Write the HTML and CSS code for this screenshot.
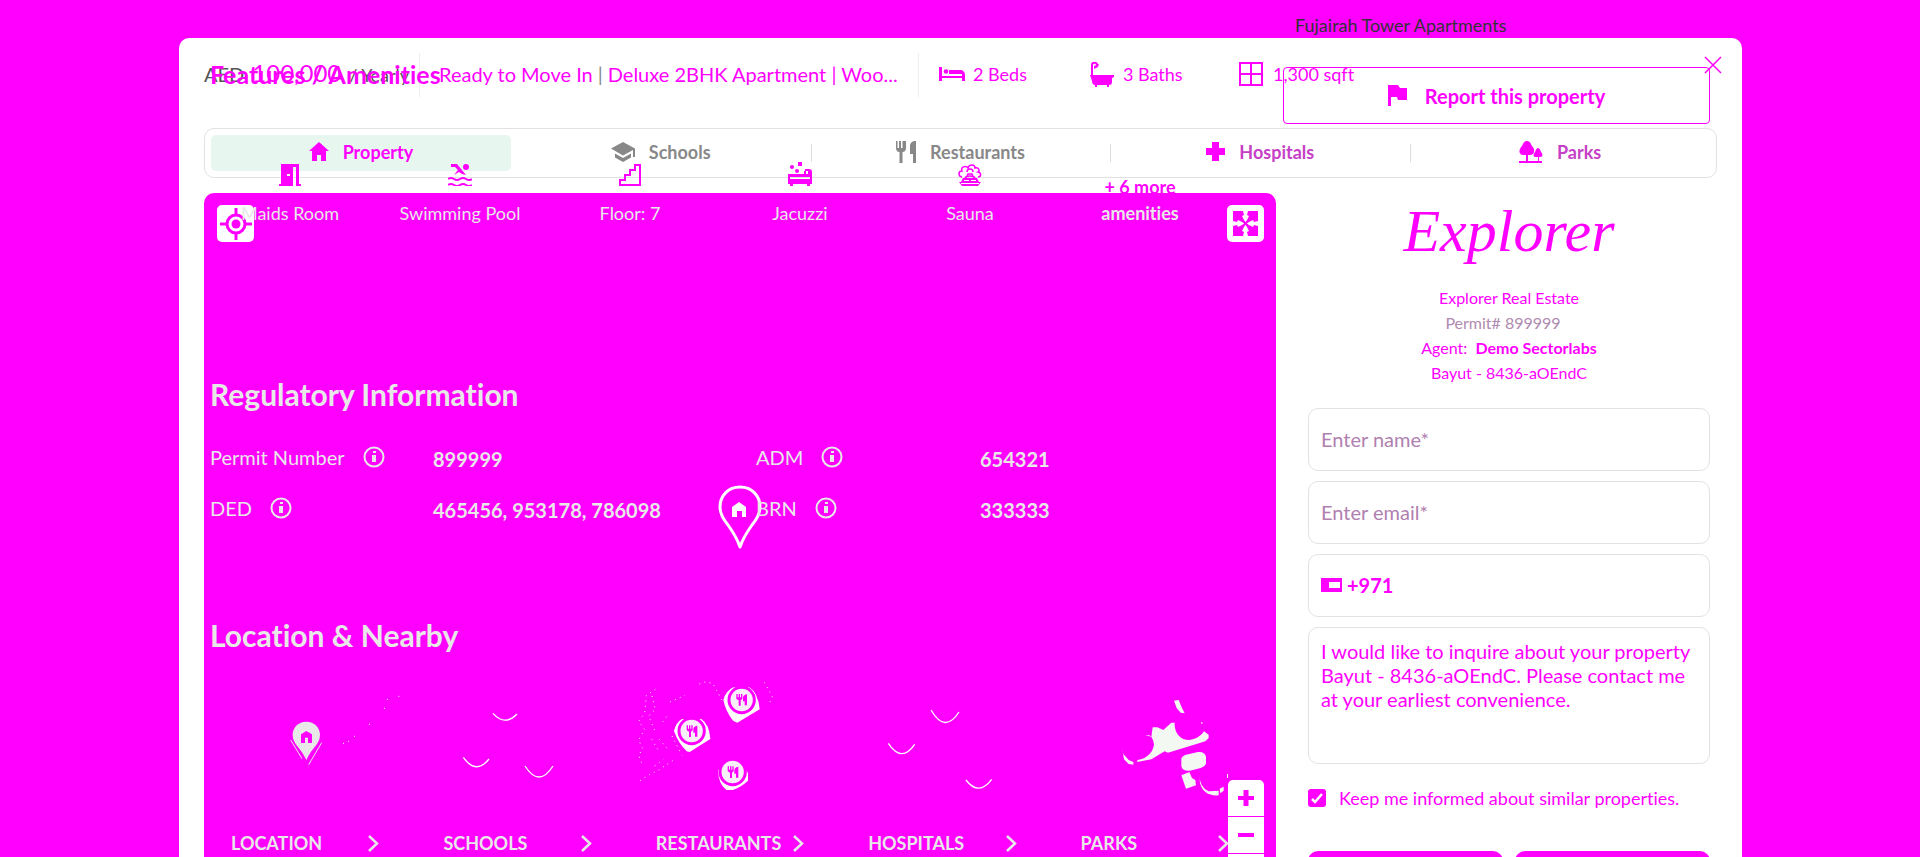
FILE: index.html
```html
<!DOCTYPE html>
<html lang="en">
<head>
<meta charset="utf-8">
<title>Fujairah Tower Apartments</title>
<link rel="stylesheet" href="styles.css">
</head>
<body>
<main class="modal">
  <button class="close" aria-label="Close"><svg width="18" height="18" viewBox="0 0 18 18"><path d="M1 1 17 17M17 1 1 17" stroke="currentColor" stroke-width="1.5"/></svg></button>
  <header class="summary">
    <div class="price"><span>AED</span> <strong>100,000</strong> <small>/ Yearly</small></div>
    <div class="title">Ready to Move In <span class="bar">|</span> Deluxe 2BHK Apartment | Woo...</div>
    <ul class="facts">
      <li><svg width="26" height="26" viewBox="0 0 26 26"><path fill="currentColor" d="M0 6h3v10h20v4h3v-6c0-3-2-5-5-5H10v4h13v3H0zM0 16h3v4H0zM3 15h20v2H3z"/><circle cx="7" cy="10.500" r="2.300" fill="currentColor"/></svg>2 Beds</li>
      <li><svg width="26" height="26" viewBox="0 0 26 26"><path fill="none" stroke="currentColor" stroke-width="2" d="M3 15V4c0-3 5-3 5 0"/><path fill="currentColor" d="m5 5 5-2-1 3-4 2zM1 14h24v2l-2 1v4c0 2-1 3-3 3v2h-2v-2H8v2H6v-2c-2 0-3-2-3-4z"/></svg>3 Baths</li>
      <li class="area"><svg width="24" height="24" viewBox="0 0 24 24"><path fill="none" stroke="currentColor" stroke-width="2" d="M1 1h22v22H1zM12 1v22M1 12h22"/></svg>1,300 sqft</li>
    </ul>
  </header>
  <nav class="tabs">
    <button class="tab active"><svg width="20" height="20" viewBox="0 0 20 20"><path fill="currentColor" d="M10 0 20 9h-3v10h-5v-6H8v6H3V9H0z"/></svg>Property</button>
    <button class="tab"><svg width="24" height="20" viewBox="0 0 24 20"><path fill="currentColor" d="M12 0 24 6.500V15h-2V8L12 13.500 0 6.500zM4 11.500l8 4.500 8-4.500v4L12 20l-8-4.500z"/></svg>Schools</button>
    <button class="tab split"><svg width="20" height="22" viewBox="0 0 20 22"><path fill="currentColor" d="M0 0h1.500v7H3V0h2v7h1.500V0H8v0h2v7c0 2-1 4-3.500 4v11h-3V11C1 11 0 9 0 7zM20 0v22h-3v-9h-3V5c0-3 2-5 6-5z"/></svg>Restaurants</button>
    <button class="tab split mixed"><svg width="19" height="19" viewBox="0 0 19 19"><path fill="#f0f" d="M6 0h7v6h6v7h-6v6H6v-6H0V6h6z"/></svg>Hospitals</button>
    <button class="tab split mixed"><svg width="24" height="22" viewBox="0 0 24 22"><path fill="#f0f" d="M8 0c3 0 4 3 5 5 4 4 2 9-2 9H9v6h10v-4h-2c-3 0-3-3-1-5 1-3 2-4 3-4s2 1 3 4c2 2 2 5-1 5h-1v4h3v2H0v-2h7v-6H4C0 14-1 9 3 5c1-2 2-5 5-5z"/></svg>Parks</button>
  </nav>
  <div class="content">
    <section class="map" aria-label="Map">
      <button class="mapbtn locate" aria-label="Locate"><svg width="32" height="32" viewBox="0 0 32 32"><g fill="none" stroke="currentColor" stroke-width="3"><circle cx="16" cy="16" r="9"/><path d="M16 0v7M16 25v7M0 16h7M25 16h7"/></g><circle cx="16" cy="16" r="4.500" fill="currentColor"/></svg></button>
      <button class="mapbtn expand" aria-label="Full screen"><svg width="25" height="25" viewBox="0 0 25 25"><path fill="currentColor" d="M0 0h25v25H0z"/><path fill="#fff" d="m10 0 2.500 0H15L14 4l2 1-3.500 7L9 5l2-1zM10 25h5l-1-4 2-1-3.500-7L9 20l2 1zM0 10v5l4-1 1 2 7-3.500L5 9l-1 2zM25 10v5l-4-1-1 2-7-3.500L20 9l1 2z"/><path stroke="currentColor" stroke-width="2" d="m7 7 11 11M18 7 7 18"/></svg></button>
      <svg class="pin" width="44" height="64" viewBox="0 0 44 64"><path fill="#f0f" stroke="#fff" stroke-width="3" stroke-linejoin="round" d="M22 2C10 2 2 11 2 22c0 7 3 12 8 18 5 7 9 13 12 22 3-9 7-15 12-22 5-6 8-11 8-18C42 11 34 2 22 2z"/><path fill="#fff" d="m21 17 7 5v10h-4v-6h-5v6h-5V22z"/></svg>
      <div class="zoom">
        <button aria-label="Zoom in"><svg width="16" height="16" viewBox="0 0 16 16"><path stroke="currentColor" stroke-width="5" d="M8 0v16"/><path stroke="currentColor" stroke-width="4" d="M0 8h16"/></svg></button>
        <button aria-label="Zoom out"><svg width="16" height="16" viewBox="0 0 16 16"><path stroke="currentColor" stroke-width="4" d="M0 8h16"/></svg></button>
        <button aria-label="Reset view"></button>
      </div>
    </section>
    <form class="contact">
      <div class="logo">Explorer</div>
      <div class="agency">
        <div>Explorer Real Estate</div>
        <div class="permit">Permit# 899999</div>
        <div>Agent: &nbsp;<b>Demo Sectorlabs</b></div>
        <div>Bayut - 8436-aOEndC</div>
      </div>
      <div class="fields">
        <input class="field" type="text" aria-label="Name" placeholder="Enter name*">
        <input class="field" type="email" aria-label="Email" placeholder="Enter email*">
        <div class="field phone"><svg width="21" height="14" viewBox="0 0 21 14"><path fill="#f0f" d="M0 0h21v14H0z"/><path fill="#fff" d="M8 4h11v6H8z"/></svg><input type="tel" aria-label="Phone" value="+971"></div>
        <textarea class="field message" aria-label="Message">I would like to inquire about your property Bayut - 8436-aOEndC. Please contact me at your earliest convenience.</textarea>
      </div>
      <label class="keep"><span class="tick"><input type="checkbox" checked><svg width="12" height="11" viewBox="0 0 12 11"><path fill="none" stroke="#fff" stroke-width="2.500" d="m1 6 3 3 7-8"/></svg></span>Keep me informed about similar properties.</label>
      <div class="actions"><button type="button" aria-label="Call"></button><button type="button" aria-label="Email"></button></div>
    </form>
  </div>
</main>

<div class="details">
  <div class="left">
    <h2 class="features">Features / Amenities</h2>
    <ul class="amenities">
      <li><svg width="22" height="22" viewBox="0 0 22 22"><path fill="currentColor" d="M2 0h18v20h2v2h-5V3h-3v19H0v-2h2z"/><path fill="#fff" d="M8 10h3v2H8z"/></svg><span>Maids Room</span></li>
      <li><svg width="24" height="22" viewBox="0 0 24 22"><path fill="currentColor" d="M3 0h6l9 11-4-1-3-2-5 3 4-5-3-3H3z"/><circle cx="18" cy="3" r="3" fill="currentColor"/><path fill="none" stroke="currentColor" stroke-width="2" d="M0 15q3-2 6 0t6 0 6 0 6 0M0 21q3-2 6 0t6 0 6 0 6 0"/></svg><span>Swimming Pool</span></li>
      <li><svg width="22" height="22" viewBox="0 0 22 22"><path fill="none" stroke="currentColor" stroke-width="2" d="M1 21v-5h5v-5h5V6h5V1h5v20z"/></svg><span>Floor: 7</span></li>
      <li><svg width="24" height="24" viewBox="0 0 24 24"><path fill="currentColor" d="M10 0h4v4h-4zM0 12h16V9h2v3h2V9h-3V7h4c2 0 3 1 3 3v12h-2v2h-3v-2H5v2H2v-2H0zm2 3v2h20v-2z"/><circle cx="4" cy="5" r="2" fill="currentColor"/><circle cx="9" cy="9" r="2" fill="currentColor"/></svg><span>Jacuzzi</span></li>
      <li><svg width="24" height="22" viewBox="0 0 24 22"><path fill="none" stroke="currentColor" stroke-width="1.500" d="M4 13C0 12 0 7 4 7c-2-4 4-6 6-3 1-4 7-4 7 0 4-1 5 3 3 4 4 1 3 5 0 5M9 8c0-4 6-4 6 0M7 14c1-2 3-2 5-2s4 0 5 2M9 12l1-2h4l1 2"/><path fill="currentColor" d="M5 14h14l2 4h2l-3 4H4l-3-4h2z"/><path stroke="#fff" d="M6 16.500h5M13 16.500h5M3 19.500h18"/></svg><span>Sauna</span></li>
      <li class="more"><b>+ 6 more</b><b class="light">amenities</b></li>
    </ul>
    <h2 class="regulatory">Regulatory Information</h2>
    <dl class="info">
      <dt>Permit Number <svg width="22" height="22" viewBox="0 0 22 22"><use href="#i"/></svg></dt><dd>899999</dd>
      <dt>ADM <svg width="22" height="22" viewBox="0 0 22 22"><use href="#i"/></svg></dt><dd>654321</dd>
      <dt>DED <svg width="22" height="22" viewBox="0 0 22 22"><use href="#i"/></svg></dt><dd>465456, 953178, 786098</dd>
      <dt>BRN <svg width="22" height="22" viewBox="0 0 22 22"><use href="#i"/></svg></dt><dd>333333</dd>
    </dl>
    <h2 class="location">Location &amp; Nearby</h2>
    <div class="nearby">
      <a class="card" href="#location">
        <svg class="art" viewBox="0 0 192 120"><g transform="translate(-21 -70) scale(.33333)"><path fill="#e8e8e8" d="M349 335c-24 0-41 17-41 40 0 28 24 37 41 75 17-38 41-47 41-75 0-23-17-40-41-40z"/><path fill="#f0f" d="m349 363 17 10v26h-12v-16h-9v16h-12v-26z"/><path fill="none" stroke="#e8e8e8" stroke-width="3" d="m302 390 34 56M395 398l-39 66"/><path stroke="#fff" stroke-width="3" d="M625 259h3M591 268h3M582 295h3M537 343h3M492 379h3M474 394h3M459 400h3"/></g></svg>
        <span class="name">LOCATION<svg width="11" height="17" viewBox="0 0 11 17"><use href="#c"/></svg></span></a>
      <a class="card" href="#schools">
        <svg class="art" viewBox="0 0 192 120"><g transform="translate(-233 -70) scale(.33333)" fill="none" stroke="#fff" stroke-width="4"><path d="M909 310q36 40 72 2M820 442q38 54 77 5M1005 468q42 66 84 0"/></g></svg>
        <span class="name">SCHOOLS<svg width="11" height="17" viewBox="0 0 11 17"><use href="#c"/></svg></span></a>
      <a class="card" href="#restaurants">
        <svg class="art" viewBox="0 0 192 120"><g transform="translate(-16 -20) scale(.33333)">
          <path fill="#fff" d="M162 213q6-26 24-36h58q24 16 27 60l-62 39-9-2q-26-26-38-61zM310 120q8-28 30-38h48q26 16 31 66l-67 40-12-5q-22-26-30-63zM295 330l16-20h55l18 30v22q-22 20-45 28h-20q-26-20-24-60z"/>
          <g fill="#f8f0f8" stroke="#f0f" stroke-width="9"><circle cx="215" cy="213" r="38"/><circle cx="365" cy="120" r="38"/><circle cx="338" cy="336" r="38"/></g>
          <g fill="#f0f"><path id="f" d="M200 196h4v10h3v-10h4v10h3v-10h4v15l-5 4v16h-6v-16l-7-4zM232 197v33h-7v-12h-5v-12q2-8 12-9z"/><use href="#f" x="149" y="-94"/><use href="#f" x="123" y="123"/></g>
          <path fill="none" stroke="#fff" stroke-width="3" stroke-dasharray="3 13" d="m238 72 20-7 21 6 27 50M156 228l30 58M106 88l-27 18-5 54-18 24 18 24-18 32 12 26-12 20 12 30M96 108l10 40-20 20 22 52M95 238l18 30M140 170l-12 16M150 126l45-20M118 238l26 30M158 302l-42 28-28 14-28 18M104 318l26-20M433 67l24 42-8 19"/></g></svg>
        <span class="name">RESTAURANTS<svg width="11" height="17" viewBox="0 0 11 17"><use href="#c"/></svg></span></a>
      <a class="card" href="#hospitals">
        <svg class="art" viewBox="0 0 192 120"><g transform="translate(-228 -20) scale(.33333)" fill="none" stroke="#fff" stroke-width="4"><path d="M933 150q42 72 84 6M805 250q40 60 79 3M1038 360q38 50 77-2"/></g></svg>
        <span class="name">HOSPITALS<svg width="11" height="17" viewBox="0 0 11 17"><use href="#c"/></svg></span></a>
      <a class="card" href="#parks">
        <svg class="art" viewBox="0 0 192 120"><g transform="translate(-41 -20) scale(.33333)"><path fill="#f3f8f3" d="M462 122l14-2 10 24 8 16-12-2-12-14zM376 226l18 4 4-28h14l18 8 24-22h10c-2 30 16 52 44 52 22-2 36-14 44-26l14 10v10l-10 10-112 34-10-4-40 24-42 8v-6c32-4 48-28 50-46-2-14-6-24-14-28zM306 262l4 20 16 18 14 6v8l-14-2-14-14zM484 296q2-8 14-12l36-8q20-2 24 14v20q-2 10-16 14l-32 8q-24 2-26-14zM484 346l24-10 8 18 10 6 2 16-30 10zM538 344q0 36 28 50l30-2v14q-44 4-56-36zM599 386l12-6v12l-10 8zM544 186h3v6h-3zM621 342h3v12h-3z"/></g></svg>
        <span class="name">PARKS<svg width="11" height="17" viewBox="0 0 11 17"><use href="#c"/></svg></span></a>
    </div>
  </div>
  <div class="right">
    <div class="address">Fujairah Tower Apartments</div>
    <button class="report"><svg width="19" height="21" viewBox="0 0 19 21"><path fill="currentColor" d="M0 0h10l2 3h7v12h-9l-1-3H3v9H0z"/></svg>Report this property</button>
  </div>
</div>

<svg class="defs" width="0" height="0"><defs>
  <g id="i"><circle cx="11" cy="11" r="9.500" fill="none" stroke="#e8e8e8" stroke-width="2"/><path fill="#e8e8e8" d="M10 5h3v2h-3zM9 9h4v7H9z"/></g>
  <path id="c" fill="none" stroke="#e8e8e8" stroke-width="2.500" d="m1 1 8 7.500L1 16"/>
</defs></svg>
</body>
</html>
```

FILE: styles.css
```css
* { box-sizing: border-box; }
body { margin: 0; height: 100vh; overflow: hidden; position: relative; background: #f0f; color: #f0f; font: 18px/24px Lato, "Open Sans", sans-serif; font-variant-ligatures: none; }
button, input, textarea { font: inherit; color: inherit; margin: 0; padding: 0; border: 0; background: none; }
ul, dl, dd, h2 { margin: 0; padding: 0; list-style: none; }
svg { flex: none; display: block; }
.defs { position: absolute; }

.modal { position: relative; margin: 38px 178px 0 179px; padding: 15px 25px 0; background: #fff; border-radius: 10px 10px 0 0; }
.close { position: absolute; top: 18px; right: 20px; }
.summary { display: flex; align-items: center; height: 44px; white-space: nowrap; }
.price { display: flex; align-items: baseline; gap: 8px; width: 215px; padding-bottom: 2px; color: #555; font-size: 20px; }
.price strong { color: #f0f; font-size: 24px; font-weight: 400; }
.price small { font-size: 18px; }
.title { display: flex; flex: 0 1 500px; align-items: center; gap: 5px; height: 44px; padding: 0 0 2px 19px; border: solid #eee; border-width: 0 1px; font-size: 20px; }
.bar { color: #888; }
.facts { display: flex; padding: 0 0 2px 20px; }
.facts li { display: flex; align-items: center; gap: 8px; width: 150px; }
.facts .area { gap: 10px; }

.tabs { display: grid; grid-template-columns: repeat(5, 1fr); height: 50px; margin-top: 31px; padding: 6px; border: 1px solid #e2e2e2; border-radius: 10px; }
.tab { display: flex; position: relative; align-items: center; justify-content: center; gap: 14px; padding-bottom: 3px; color: #888; font-weight: 700; }
.active { background: #e8f6f0; color: #f0f; border-radius: 5px; }
.mixed { color: #c63fc6; }
.split::before { content: ""; position: absolute; left: 0; top: 9px; width: 1px; height: 18px; background: #ddd; }

.content { display: grid; grid-template-columns: minmax(0, 1fr) 402px; gap: 32px; margin-top: 15px; padding-right: 7px; }
.map { position: relative; background: #f0f; border-radius: 10px 10px 0 0; }
.mapbtn { position: absolute; top: 12px; display: grid; place-items: center; width: 37px; height: 37px; background: #fff; border-radius: 5px; }
.locate { left: 13px; }
.expand { right: 12px; }
.pin { position: absolute; left: calc(50% - 22px); top: calc(50% - 62px); }
.zoom { position: absolute; right: 12px; bottom: 10px; width: 36px; overflow: hidden; background: #fff; border-radius: 5px; z-index: 1; }
.zoom button { display: grid; place-items: center; width: 100%; height: 37px; border-bottom: 1px solid #f0f; }

.logo { height: 92px; padding-top: 6px; font: italic 60px/64px "Liberation Serif", cursive; text-align: center; }
.agency { font-size: 16px; line-height: 25px; text-align: center; }
.permit { color: #b08ab0; padding-right: 12px; }
.fields { display: grid; gap: 10px; margin-top: 23px; font-size: 20px; }
.field { display: block; width: 100%; height: 63px; padding: 0 12px 2px; border: 1px solid #e2e2e2; border-radius: 10px; }
.field::placeholder { color: #b080b0; opacity: 1; }
.phone { display: flex; align-items: center; gap: 5px; font-weight: 700; }
.phone input { flex: 1; min-width: 0; }
.message { height: 137px; padding-top: 11px; resize: none; overflow: hidden; }
.keep { display: flex; align-items: center; gap: 13px; height: 20px; margin-top: 24px; }
.tick { display: grid; place-items: center; }
.tick > * { grid-area: 1 / 1; }
.tick input { appearance: none; width: 18px; height: 18px; background: #f0f; border-radius: 3px; }
.actions { display: grid; grid-template-columns: 1fr 1fr; gap: 12px; margin-top: 43px; }
.actions button { height: 50px; background: #f0f; border-radius: 10px; }

.details { position: absolute; inset: 0; display: grid; grid-template-columns: minmax(0, 1fr) 427px; gap: 10px; padding: 0 210px 0 205px; overflow: hidden; pointer-events: none; }
.details a, .details button { pointer-events: auto; }
.left { padding: 57px 0 0 5px; color: #e8e8e8; }
.left h2 { font-size: 30px; line-height: 36px; }
.left .features { font-size: 25px; line-height: 34px; font-weight: 700; color: #f0f; }
.amenities { display: grid; grid-template-columns: repeat(6, 170px); align-items: end; height: 62px; margin: 71px 0 0 -5px; text-align: center; line-height: 26px; }
.amenities li { display: flex; flex-direction: column; align-items: center; gap: 14px; }
.amenities svg { color: #f0f; }
.amenities .more { gap: 0; color: #f0f; }
.amenities .light { color: #e8e8e8; }
.left .regulatory { margin-top: 152px; }
.info { display: grid; grid-template-columns: 223px 323px 224px 1fr; grid-auto-rows: 51px; align-items: center; margin-top: 19px; font-size: 20px; }
.info dt { display: flex; align-items: center; gap: 18px; }
.info dd { padding-top: 4px; font-weight: 700; }
.left .location { margin-top: 84px; }
.nearby { display: grid; grid-template-columns: repeat(5, 1fr); gap: 20px; margin: 27px 20px 0 1px; }
.card { color: inherit; text-decoration: none; }
.art { width: 192px; height: 120px; overflow: visible; }
.name { display: flex; align-items: center; justify-content: space-between; margin-top: 31px; padding: 0 24px 0 20px; font-weight: 700; }
.right { display: flex; flex-direction: column; gap: 30px; padding-top: 13px; }
.address { padding-left: 12px; color: #333; }
.report { display: flex; align-items: center; justify-content: center; gap: 18px; height: 57px; border: 1px solid #f0f; border-radius: 4px; font-size: 20px; font-weight: 700; }
```
